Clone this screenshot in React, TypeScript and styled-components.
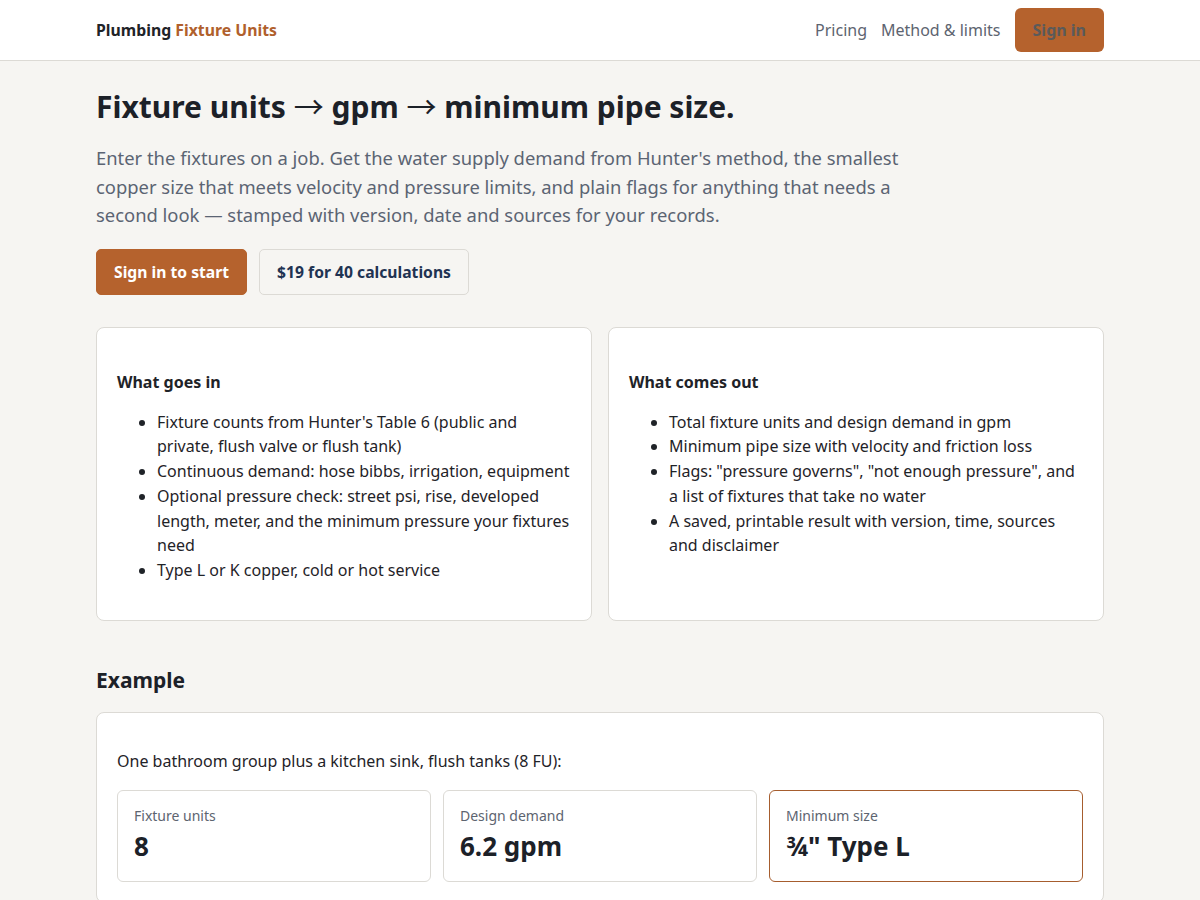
import React from "react";
import styled, { createGlobalStyle } from "styled-components";

const Global = createGlobalStyle`
  html, body { margin: 0; padding: 0; }
  body {
    background: #f6f5f2;
    font-family: "Noto Sans", "Open Sans", sans-serif;
    color: #1f2328;
  }
  * { box-sizing: border-box; }
`;

const Header = styled.header`
  background: #ffffff;
  border-bottom: 1px solid #dcdad5;
  height: 61px;
`;

const Wrap = styled.div`
  max-width: 1008px;
  margin: 0 auto;
`;

const HeaderInner = styled(Wrap)`
  height: 60px;
  display: flex;
  align-items: center;
  justify-content: space-between;
`;

const Logo = styled.div`
  font-size: 15.8px;
  font-weight: 700;
  color: #1f2328;
  span { color: #b0602c; }
`;

const Nav = styled.nav`
  display: flex;
  align-items: center;
  gap: 14px;
`;

const NavLink = styled.a`
  color: #5d6470;
  font-size: 16px;
  text-decoration: none;
`;

const HeaderButton = styled.button`
  font-family: inherit;
  font-size: 16px;
  font-weight: 700;
  background: #b5622d;
  color: #5a5a5a;
  border: none;
  border-radius: 6px;
  height: 44px;
  padding: 0 18px;
`;

const Main = styled(Wrap)`
  padding-top: 26px;
  padding-bottom: 40px;
`;

const Title = styled.h1`
  margin: 0;
  height: 40px;
  font-size: 30px;
  line-height: 40px;
  font-weight: 700;
  color: #1c2128;
`;

const Arrow = styled.span`
  font-family: "Noto Sans CJK JP", sans-serif;
  font-weight: 400;
  line-height: 0;
`;

const Lead = styled.p`
  margin: 17px 0 0;
  max-width: 840px;
  font-size: 18.4px;
  line-height: 28.5px;
  color: #5b6473;
`;

const Actions = styled.div`
  display: flex;
  gap: 12px;
  margin-top: 19px;
`;

const Button = styled.button<{ $primary?: boolean }>`
  font-family: inherit;
  font-size: 15.7px;
  font-weight: 700;
  height: 46px;
  padding: 0 17px;
  border-radius: 5px;
  border: 1px solid ${(p) => (p.$primary ? "#b5622d" : "#dcdad5")};
  background: ${(p) => (p.$primary ? "#b5622d" : "#f6f5f2")};
  color: ${(p) => (p.$primary ? "#ffffff" : "#1f3352")};
`;

const Grid = styled.div`
  display: grid;
  grid-template-columns: 1fr 1fr;
  gap: 16px;
  margin-top: 32px;
`;

const Card = styled.section`
  background: #ffffff;
  border: 1px solid #dcdad5;
  border-radius: 8px;
  padding: 20px;
`;

const CardTitle = styled.h3`
  margin: 22px 0 0;
  font-size: 16px;
  line-height: 24px;
  font-weight: 700;
  color: #1f2328;
`;

const List = styled.ul`
  margin: 16px 0 17px;
  padding-left: 40px;
  font-size: 16px;
  line-height: 24.8px;
  color: #1f2328;
`;

const SectionTitle = styled.h2`
  margin: 44px 0 17px;
  font-size: 21px;
  line-height: 30px;
  font-weight: 700;
  color: #1c2128;
`;

const ExampleText = styled.p`
  margin: 16px 0 17px;
  font-size: 16px;
  line-height: 24px;
`;

const Stats = styled.div`
  display: grid;
  grid-template-columns: repeat(3, 1fr);
  gap: 12px;
`;

const Stat = styled.div<{ $accent?: boolean }>`
  border: 1px solid ${(p) => (p.$accent ? "#a65d2e" : "#dcdad5")};
  border-radius: 6px;
  padding: 15px 16px 18px;
  height: 92px;
`;

const StatLabel = styled.div`
  font-size: 14px;
  line-height: 20px;
  color: #5d6470;
`;

const StatValue = styled.div`
  margin-top: 4px;
  font-size: 26px;
  line-height: 32px;
  font-weight: 700;
  color: #1c2128;
`;

export default function App() {
  return (
    <>
      <Global />
      <Header>
        <HeaderInner>
          <Logo>
            Plumbing <span>Fixture Units</span>
          </Logo>
          <Nav>
            <NavLink href="#">Pricing</NavLink>
            <NavLink href="#">Method &amp; limits</NavLink>
            <HeaderButton>Sign in</HeaderButton>
          </Nav>
        </HeaderInner>
      </Header>
      <Main>
        <Title>
          Fixture units <Arrow>→</Arrow> gpm <Arrow>→</Arrow> minimum pipe size.
        </Title>
        <Lead>
          Enter the fixtures on a job. Get the water supply demand from Hunter's
          method, the smallest copper size that meets velocity and pressure
          limits, and plain flags for anything that needs a second look — stamped
          with version, date and sources for your records.
        </Lead>
        <Actions>
          <Button $primary>Sign in to start</Button>
          <Button>$19 for 40 calculations</Button>
        </Actions>
        <Grid>
          <Card>
            <CardTitle>What goes in</CardTitle>
            <List>
              <li>
                Fixture counts from Hunter's Table 6 (public and private, flush
                valve or flush tank)
              </li>
              <li>Continuous demand: hose bibbs, irrigation, equipment</li>
              <li>
                Optional pressure check: street psi, rise, developed length,
                meter, and the minimum pressure your fixtures need
              </li>
              <li>Type L or K copper, cold or hot service</li>
            </List>
          </Card>
          <Card>
            <CardTitle>What comes out</CardTitle>
            <List>
              <li>Total fixture units and design demand in gpm</li>
              <li>Minimum pipe size with velocity and friction loss</li>
              <li>
                Flags: "pressure governs", "not enough pressure", and a list of
                fixtures that take no water
              </li>
              <li>
                A saved, printable result with version, time, sources and
                disclaimer
              </li>
            </List>
          </Card>
        </Grid>
        <SectionTitle>Example</SectionTitle>
        <Card>
          <ExampleText>
            One bathroom group plus a kitchen sink, flush tanks (8 FU):
          </ExampleText>
          <Stats>
            <Stat>
              <StatLabel>Fixture units</StatLabel>
              <StatValue>8</StatValue>
            </Stat>
            <Stat>
              <StatLabel>Design demand</StatLabel>
              <StatValue>6.2 gpm</StatValue>
            </Stat>
            <Stat $accent>
              <StatLabel>Minimum size</StatLabel>
              <StatValue>¾" Type L</StatValue>
            </Stat>
          </Stats>
        </Card>
      </Main>
    </>
  );
}
